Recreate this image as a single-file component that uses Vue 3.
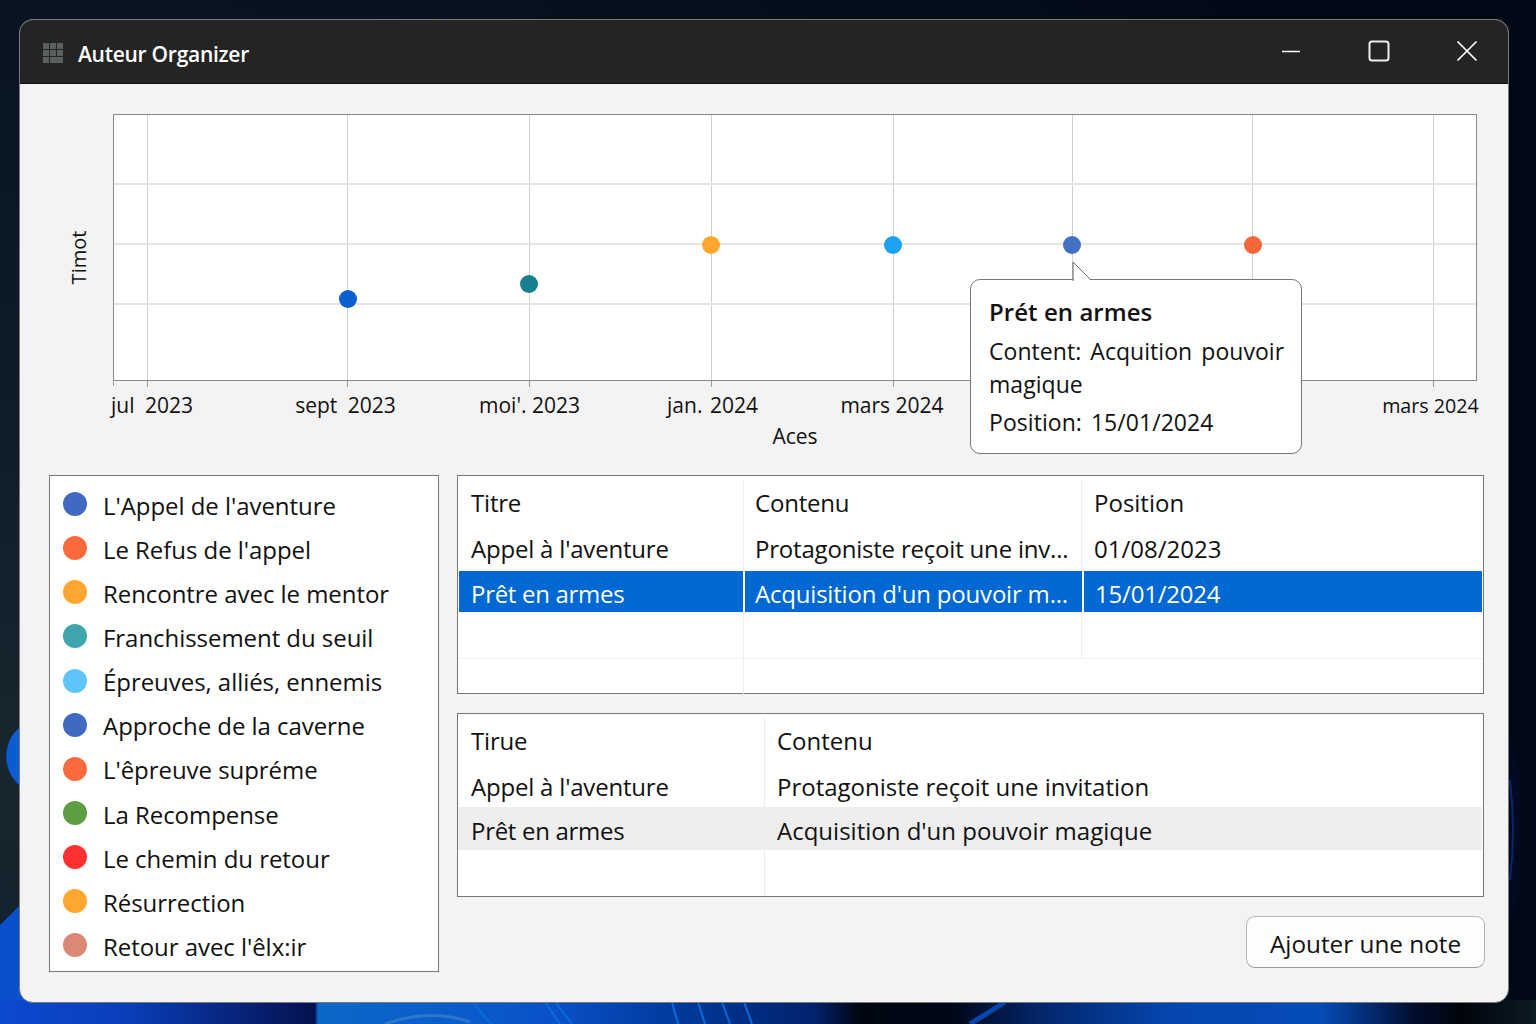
<template>
  <div class="desktop">
    <svg class="wallpaper" width="1536" height="1024" viewBox="0 0 1536 1024">
      <defs>
        <linearGradient id="strip" x1="0" y1="0" x2="1" y2="0">
          <stop offset="0" stop-color="#0b49cf" />
          <stop offset="0.08" stop-color="#0a3fbb" />
          <stop offset="0.205" stop-color="#05114f" />
          <stop offset="0.207" stop-color="#0a68c6" />
          <stop offset="0.3" stop-color="#0a5ccc" />
          <stop offset="0.36" stop-color="#0a50c8" />
          <stop offset="0.44" stop-color="#003a9c" />
          <stop offset="0.53" stop-color="#02226c" />
          <stop offset="0.56" stop-color="#000510" />
          <stop offset="0.62" stop-color="#000818" />
          <stop offset="0.68" stop-color="#03276e" />
          <stop offset="0.76" stop-color="#0546ae" />
          <stop offset="0.86" stop-color="#054cb8" />
          <stop offset="0.92" stop-color="#020e30" />
          <stop offset="0.95" stop-color="#01040c" />
          <stop offset="1" stop-color="#0b1a24" />
        </linearGradient>
      </defs>
      <ellipse cx="1508" cy="830" rx="14" ry="90" fill="#020a22" />
      <path d="M1510 780 Q1516 830 1510 880" stroke="#06276a" stroke-width="2" fill="none" />
      <path d="M19 728 C2 742 2 770 19 785 Z" fill="#0b5cd0" />
      <path d="M0 925 L20 905 L40 905 L40 1010 L0 1010 Z" fill="#0a4fcb" />
      <rect x="0" y="1000" width="1536" height="24" fill="url(#strip)" />
      <path d="M474 1002 Q482 1016 492 1024M545 1002 L560 1024M555 1002 L572 1024M672 1002 L678 1024M698 1002 L705 1024M722 1002 L730 1024M744 1002 L752 1024" stroke="#0a6ad8" stroke-width="2" fill="none" />
      <path d="M1005 1002 L970 1024" stroke="#0647b0" stroke-width="5" fill="none" />
      <path d="M385 1024 Q430 1008 470 1022" stroke="#4f8fc8" stroke-width="3" stroke-opacity="0.5" fill="none" />
    </svg>

    <div class="window">
      <header class="titlebar">
        <div class="app-icon">
          <span v-for="n in 8" :key="n" :class="{ wide: n === 8 }"></span>
        </div>
        <div class="app-title">Auteur Organizer</div>
        <div class="win-controls">
          <svg class="min" width="20" height="20" viewBox="0 0 20 20"><path d="M1 10.5H19" stroke="#fff" stroke-width="1.5" fill="none" /></svg>
          <svg width="22" height="22" viewBox="0 0 22 22"><rect x="1.5" y="1.5" width="19" height="19" rx="2.5" stroke="#eee" stroke-width="2" fill="none" /></svg>
          <svg width="22" height="22" viewBox="0 0 22 22"><path d="M1.5 1.5L20.5 20.5M20.5 1.5L1.5 20.5" stroke="#fff" stroke-width="1.7" fill="none" /></svg>
        </div>
      </header>

      <main class="content">
        <section class="chart">
          <div class="y-label"><span>Timot</span></div>
          <div class="chart-main">
            <div class="plot">
              <i class="tick-start"></i>
              <i v-for="x in gridX" :key="'x' + x" class="vline" :style="{ left: x + 'px' }"></i>
              <i v-for="y in gridY" :key="'y' + y" class="hline" :style="{ top: y + 'px' }"></i>
              <i v-for="p in points" :key="p.x" class="point" :style="{ left: p.x + 'px', top: p.y + 'px', background: p.color }"></i>

              <div class="tooltip">
                <svg class="tip-arrow" width="22" height="20" viewBox="0 0 22 20">
                  <path d="M1 20V1L19 19" fill="#fff" stroke="#666" stroke-width="1" />
                  <path d="M2 20V3L18 19.5V20Z" fill="#fff" />
                </svg>
                <div class="tip-title">Prét en armes</div>
                <div class="tip-line">Content: Acquition pouvoir magique</div>
                <div class="tip-line">Position: 15/01/2024</div>
              </div>
            </div>
            <div class="x-ticks">
              <span v-for="t in ticks" :key="t.x" :class="t.cls" :style="{ left: t.x + 'px' }">{{ t.label }}</span>
            </div>
            <div class="x-label">Aces</div>
          </div>
        </section>

        <section class="lower">
          <ul class="legend">
            <li v-for="item in legend" :key="item.label">
              <i :style="{ background: item.color }"></i>
              <span>{{ item.label }}</span>
            </li>
          </ul>

          <div class="right-col">
            <div class="table table-top">
              <div class="row head">
                <div>Titre</div><div>Contenu</div><div>Position</div>
              </div>
              <div class="row">
                <div>Appel à l'aventure</div><div>Protagoniste reçoit une inv...</div><div>01/08/2023</div>
              </div>
              <div class="row selected">
                <div>Prêt en armes</div><div>Acquisition d'un pouvoir m...</div><div>15/01/2024</div>
              </div>
              <div class="row empty">
                <div></div><div></div><div></div>
              </div>
              <div class="row empty last">
                <div></div><div></div>
              </div>
            </div>

            <div class="table table-bottom">
              <div class="row head">
                <div>Tirue</div><div>Contenu</div>
              </div>
              <div class="row second">
                <div>Appel à l'aventure</div><div>Protagoniste reçoit une invitation</div>
              </div>
              <div class="row soft">
                <div>Prêt en armes</div><div>Acquisition d'un pouvoir magique</div>
              </div>
              <div class="row empty">
                <div></div><div></div>
              </div>
            </div>

            <div class="actions">
              <button class="add-btn">Ajouter une note</button>
            </div>
          </div>
        </section>
      </main>
    </div>
  </div>
</template>

<script setup>
const gridX = [33, 233, 415, 597, 779, 958, 1138, 1319]
const gridY = [68, 128, 188]

const points = [
  { x: 234, y: 184, color: '#0a5fd0' },
  { x: 415, y: 169, color: '#17808f' },
  { x: 597, y: 130, color: '#ffa630' },
  { x: 779, y: 130, color: '#1da1f2' },
  { x: 958, y: 130, color: '#4470c4' },
  { x: 1139, y: 130, color: '#f4673a' }
]

const ticks = [
  { label: 'jul 2023', x: 39, cls: 'wide' },
  { label: 'sept 2023', x: 232.5, cls: 'wide' },
  { label: "moi'. 2023", x: 416.5 },
  { label: 'jan. 2024', x: 599.5, cls: 'mid' },
  { label: 'mars 2024', x: 779 },
  { label: 'mars 2024', x: 1317.5, cls: 'small' }
]

const legend = [
  { label: "L'Appel de l'aventure", color: '#4169c1' },
  { label: "Le Refus de l'appel", color: '#fb6a3d' },
  { label: 'Rencontre avec le mentor', color: '#ffa630' },
  { label: 'Franchissement du seuil', color: '#40a6ad' },
  { label: 'Épreuves, alliés, ennemis', color: '#5ec5fb' },
  { label: 'Approche de la caverne', color: '#4169c1' },
  { label: "L'êpreuve supréme", color: '#fb6a3d' },
  { label: 'La Recompense', color: '#5c9e41' },
  { label: 'Le chemin du retour', color: '#ff3030' },
  { label: 'Résurrection', color: '#ffa630' },
  { label: "Retour avec l'êlx:ir", color: '#dc8877' }
]
</script>

<style>
html, body { margin: 0; background: #06121f; }
</style>

<style scoped>
.desktop {
  position: relative;
  width: 1536px;
  height: 1024px;
  overflow: hidden;
  box-sizing: border-box;
  padding: 19px 27px 21px 19px;
  background: radial-gradient(circle at 0 75%, #17262f 0, #0b1825 520px, #071320 800px, #020916 1500px);
  font-family: "Open Sans", "Noto Sans", sans-serif;
  color: #111;
}
.wallpaper { position: absolute; left: 0; top: 0; }

.window {
  position: relative;
  height: 984px;
  display: flex;
  flex-direction: column;
  background: #f3f3f3;
  border: 1px solid #7a7a7a;
  border-radius: 14px;
  overflow: hidden;
  box-sizing: border-box;
}

.titlebar {
  height: 63px;
  flex: none;
  display: flex;
  align-items: center;
  padding: 0 30px 0 23px;
  background: #242424;
  border-bottom: 1px solid #111;
}
.app-icon {
  width: 20px;
  height: 21px;
  display: grid;
  grid-template-columns: repeat(3, 6px);
  grid-auto-rows: 6px;
  gap: 1px;
  margin-top: 4px;
}
.app-icon span { background: #5b5f5e; }
.app-icon span.wide { grid-column: span 2; }
.app-title {
  margin: 5px 0 0 15px;
  color: #fff;
  font-size: 21px;
  font-weight: 600;
  letter-spacing: -0.27px;
}
.win-controls {
  margin-left: auto;
  display: flex;
  align-items: center;
  gap: 66px;
  margin-top: -1px;
}
.win-controls .min { margin-right: 1px; }

.content {
  flex: 1;
  display: flex;
  flex-direction: column;
  padding: 30px 24px 30px 29px;
}

.chart { display: flex; height: 361px; flex: none; }
.y-label {
  width: 64px;
  flex: none;
  display: flex;
  align-items: center;
  justify-content: center;
  box-sizing: border-box;
  height: 266px;
  padding-top: 20px;
  font-size: 20px;
}
.y-label span { transform: rotate(-90deg); margin-left: -4px; }
.chart-main { flex: 1; position: relative; }
.plot {
  position: relative;
  width: 1364px;
  height: 267px;
  box-sizing: border-box;
  background: #fff;
  border: 1px solid #8a8a8a;
}
.vline {
  position: absolute;
  top: 0;
  width: 1px;
  height: 272px;
  background: linear-gradient(#cfcfcf 265px, #999 265px);
}
.tick-start { position: absolute; left: -1px; top: 267px; width: 1px; height: 4px; background: #999; }
.hline { position: absolute; left: 0; right: 0; height: 2px; background: #e4e4e4; }
.point {
  position: absolute;
  width: 18px;
  height: 18px;
  margin: -9px 0 0 -9px;
  border-radius: 50%;
}

.tooltip {
  position: absolute;
  left: 856px;
  top: 164px;
  width: 332px;
  height: 175px;
  box-sizing: border-box;
  padding: 13px 6px 0 18px;
  background: #fff;
  border: 1px solid #777;
  border-radius: 10px;
  z-index: 2;
  font-size: 23px;
  line-height: 33px;
  word-spacing: 3px;
  letter-spacing: 0.05px;
}
.tip-arrow { position: absolute; left: 101px; top: -19px; }
.tip-title { font-weight: 600; line-height: 38px; font-size: 24px; word-spacing: 0; }
.tip-line { margin-top: 4px; }
.tip-line:last-child { margin-top: 5px; }

.x-ticks { position: relative; height: 45px; font-size: 21px; }
.x-ticks span {
  position: absolute;
  top: 10px;
  transform: translateX(-50%);
  white-space: nowrap;
}
.x-ticks span.wide { word-spacing: 5px; }
.x-ticks span.mid { word-spacing: 2px; }
.x-ticks span.small { font-size: 19.7px; top: 11px; }
.x-label { font-size: 21px; text-align: center; line-height: 24px; margin-top: -2px; width: 1364px; }

.lower { display: flex; gap: 18px; flex: 1; }
.legend {
  width: 390px;
  height: 497px;
  flex: none;
  margin: 0;
  padding: 7px 0 0 13px;
  box-sizing: border-box;
  list-style: none;
  background: #fff;
  border: 1px solid #777;
  overflow: hidden;
}
.legend li {
  display: flex;
  align-items: center;
  height: 44.15px;
  font-size: 24px;
  letter-spacing: -0.05px;
}
.legend li i {
  width: 24px;
  height: 24px;
  border-radius: 50%;
  margin: -2px 16px 0 0;
  flex: none;
}

.right-col { flex: 1; display: flex; flex-direction: column; }
.table {
  background: #fff;
  border: 1px solid #777;
  box-sizing: border-box;
  font-size: 24px;
  letter-spacing: -0.2px;
}
.table-top { height: 219px; padding-top: 4px; }
.table-bottom { height: 184px; margin-top: 19px; padding-top: 4px; }
.row { display: grid; height: 45px; }
.row > div {
  padding-left: 12px;
  line-height: 45px;
  white-space: nowrap;
  border-right: 1px solid #ededed;
}
.row > div:first-child { padding-left: 13px; }
.row > div:last-child { border-right: none; }
.table-top .row { grid-template-columns: 286px 338px 1fr; }
.table-top .row > div:nth-child(2) { padding-left: 11px; letter-spacing: -0.2px; }
.table-top .row > div:nth-child(3) { letter-spacing: 0; }
.table-bottom .row { grid-template-columns: 307px 1fr; }
.table-bottom .row > div:nth-child(2) { letter-spacing: 0; }
.head { height: 46px; }
.second { height: 43px; }
.table-top .selected {
  grid-template-columns: 286px 339px 1fr;
  margin: 0 1px;
  background: #0068d2;
  color: #fff;
  height: 41px;
}
.selected > div { border-right: 2px solid #fff; line-height: 45px; }
.table-top .selected > div:first-child { padding-left: 12px; letter-spacing: -0.3px; }
.table-top .selected > div:nth-child(2) { padding-left: 10px; }
.table-top .selected > div:nth-child(3) { padding-left: 11px; letter-spacing: -0.2px; }
.selected > div:last-child { border-right: none; }
.soft { background: #eeeeee; height: 43px; margin-right: 1px; }
.soft > div { line-height: 48px; }
.soft > div:first-child { letter-spacing: -0.3px; }
.empty { height: 46px; border-bottom: 1px solid #f0f0f0; }
.table-top .empty.last { height: 36px; border-bottom: none; grid-template-columns: 286px 1fr; }
.table-bottom .empty { border-bottom: none; }

.actions { display: flex; justify-content: flex-end; margin: 19px -1px 0 0; }
.add-btn {
  width: 239px;
  height: 52px;
  padding: 2px 0 0;
  background: #fdfdfd;
  border: 1px solid #b5b5b5;
  border-bottom-color: #999;
  border-radius: 9px;
  font: inherit;
  font-size: 24.3px;
  color: #111;
}
</style>
